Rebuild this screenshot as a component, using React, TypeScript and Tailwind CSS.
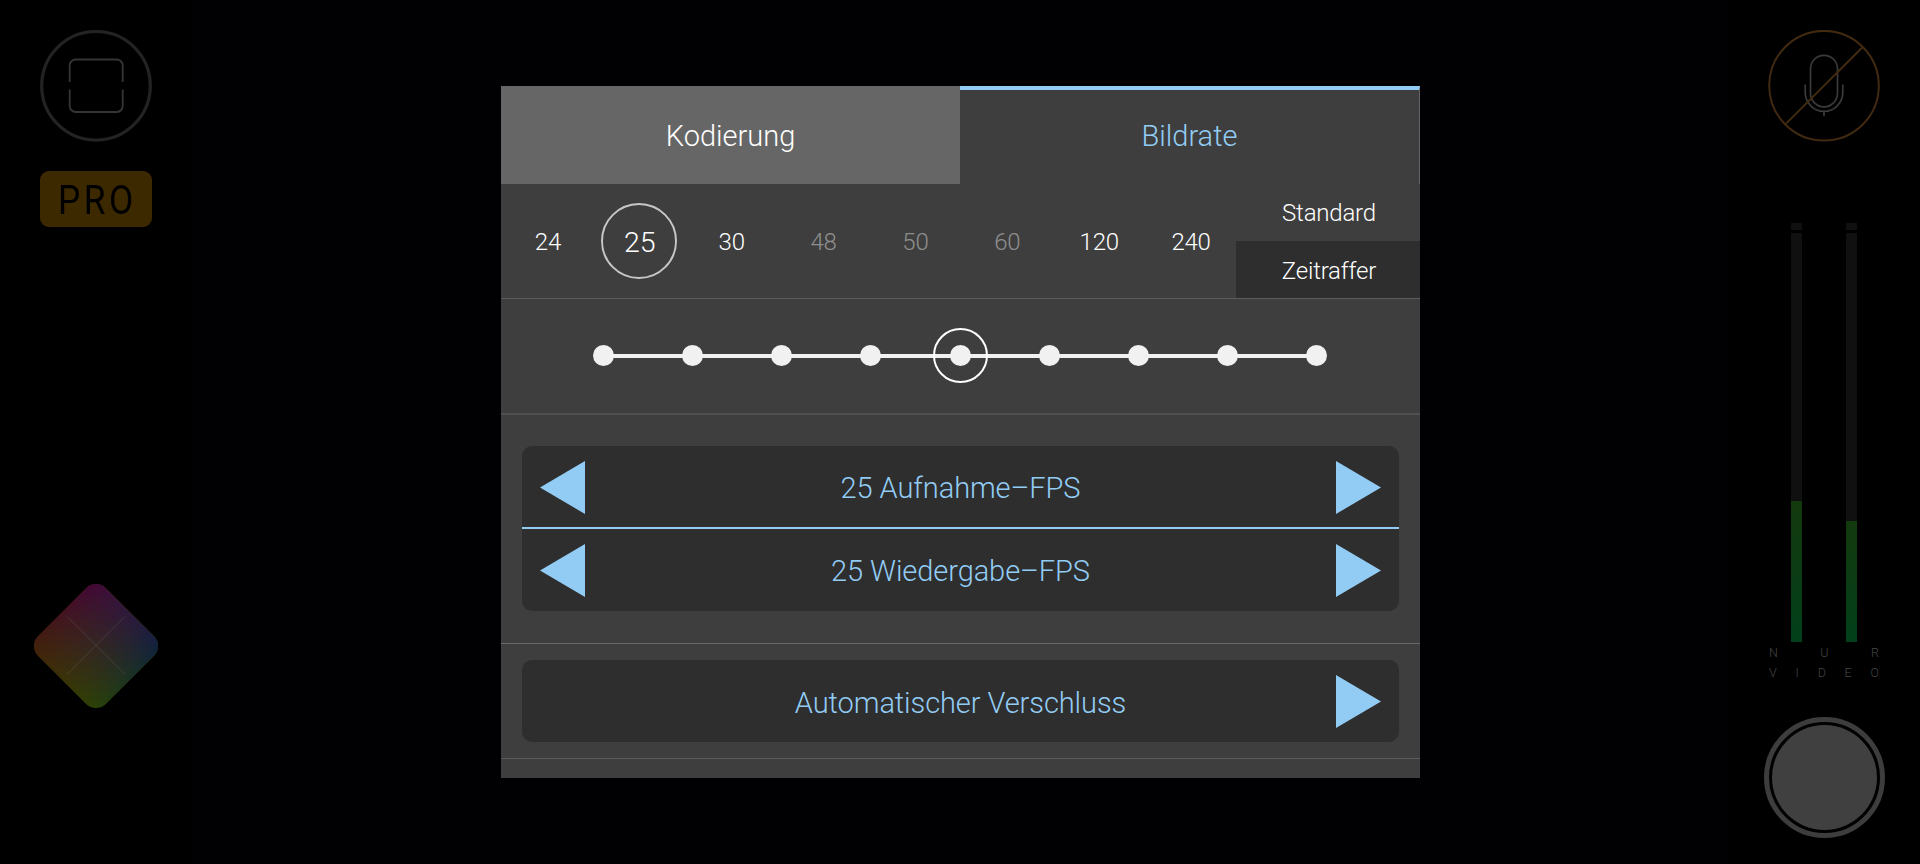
import React, { useState } from "react";
import clsx from "clsx";

interface Rate {
  value: number;
  disabled?: boolean;
}

const rates: Rate[] = [
  { value: 24 },
  { value: 25 },
  { value: 30 },
  { value: 48, disabled: true },
  { value: 50, disabled: true },
  { value: 60, disabled: true },
  { value: 120 },
  { value: 240 },
];

const steps = [0, 1, 2, 3, 4, 5, 6, 7, 8];

interface ArrowProps {
  direction: "left" | "right";
  label: string;
}

function Arrow({ direction, label }: ArrowProps) {
  return (
    <button aria-label={label} className="h-[53px] w-[45px] shrink-0">
      <svg viewBox="0 0 45 53" className="block h-full w-full fill-[#92ccf4]">
        <path d={direction === "left" ? "M45 0V53L0 26.5Z" : "M0 0V53L45 26.5Z"} />
      </svg>
    </button>
  );
}

interface SelectorRowProps {
  text: string;
  hasPrev?: boolean;
  className?: string;
}

function SelectorRow({ text, hasPrev = true, className }: SelectorRowProps) {
  return (
    <div className={clsx("flex items-center justify-between bg-[#2e2e2e] px-[18px]", className)}>
      {hasPrev ? <Arrow direction="left" label="Zurück" /> : <div className="w-[45px]" />}
      <p className="pt-0.5 text-[29px] leading-9 tracking-[-0.08px] text-[#92ccf4]">{text}</p>
      <Arrow direction="right" label="Weiter" />
    </div>
  );
}

function LeftBar() {
  return (
    <aside className="flex w-48 flex-col items-center bg-black pt-[30px]">
      <svg viewBox="0 0 112 112" className="size-28 fill-none">
        <circle cx="56" cy="55.8" r="54.3" stroke="#232323" strokeWidth="3.2" />
        <path
          d="M29.7 52V35.5a6 6 0 0 1 6-6h41a6 6 0 0 1 6 6V52M29.7 59.5V76a6 6 0 0 0 6 6h41a6 6 0 0 0 6-6V59.5"
          stroke="#353535"
          strokeWidth="1.8"
        />
      </svg>
      <div className="mt-[29px] flex h-14 w-28 items-center justify-center rounded-[9px] bg-[#3d2900]">
        <span className="scale-x-[0.86] pt-0.5 pl-1 text-[41px] leading-none font-normal tracking-[4px] text-black">PRO</span>
      </div>
      <div className="relative mt-[371px] size-24 rotate-45 overflow-hidden rounded-[14px] bg-linear-to-r from-[#43200a] to-[#2a4406]">
        <div className="absolute inset-0 bg-linear-to-r from-[#430638] to-[#0c2140] [mask-image:linear-gradient(black,transparent)]" />
        <div className="absolute top-[47px] left-[7px] h-px w-[82px] bg-white/7" />
        <div className="absolute top-[7px] left-[47px] h-[82px] w-px bg-white/7" />
      </div>
    </aside>
  );
}

function Meter({ level }: { level: number }) {
  return (
    <div className="flex w-[11px] flex-col gap-[3px]">
      <div className="h-[7px] bg-[#101010]" />
      <div className="flex h-[409px] items-end bg-[#101010]">
        <div className="w-full bg-linear-to-t from-[#00401a] to-[#13390e]" style={{ height: level }} />
      </div>
    </div>
  );
}

function RightBar() {
  return (
    <aside className="flex w-48 flex-col items-center bg-black pt-[30px]">
      <svg viewBox="0 0 112 112" className="size-28 fill-none">
        <g stroke="#3a3a3c" strokeWidth="1.7">
          <rect x="42.5" y="25.3" width="27" height="51.5" rx="13.5" />
          <path d="M37.2 54.5V62.5a18.8 18.8 0 0 0 37.6 0V54.5M56 81.3V86.3" />
        </g>
        <g stroke="#412a10" strokeWidth="2">
          <circle cx="56" cy="55.7" r="54.8" />
          <path d="M94.7 17 17.3 94.4" />
        </g>
      </svg>
      <div className="mt-[81px] flex gap-[44px]">
        <Meter level={141} />
        <Meter level={121} />
      </div>
      <div className="mt-px flex w-[110px] flex-col text-[12.5px] leading-5 text-[#454545]">
        <div className="flex justify-between">
          {"NUR".split("").map((c) => <span key={c}>{c}</span>)}
        </div>
        <div className="flex justify-between">
          {"VIDEO".split("").map((c) => <span key={c}>{c}</span>)}
        </div>
      </div>
      <button aria-label="Aufnahme" className="mt-[34px] size-[121px] rounded-full border-[5px] border-[#3d3d3d] p-[3px]">
        <div className="h-full w-full rounded-full bg-[#404040]" />
      </button>
    </aside>
  );
}

function RateRow() {
  const [selected, setSelected] = useState(25);

  return (
    <div className="flex h-[115px] border-b-[1.5px] border-[#5c5c5c]">
      <div className="grid w-[735px] grid-cols-8">
        {rates.map(({ value, disabled }) => (
          <button
            key={value}
            disabled={disabled}
            onClick={() => setSelected(value)}
            className={clsx("flex items-center justify-center", disabled ? "text-[#8e8e8e]" : "text-white")}
          >
            <span
              className={clsx(
                "flex size-[76px] items-center justify-center rounded-full pl-0.5",
                value === selected && "border-2 border-[#c6c6c6] pt-1 text-[28.5px]",
                value !== selected && "pt-px text-2xl tracking-[-0.2px]"
              )}
            >
              {value}
            </span>
          </button>
        ))}
      </div>
      <div className="flex flex-1 flex-col text-2xl tracking-[-0.2px] text-white">
        <button className="h-[57px] pt-px pl-0.5">Standard</button>
        <button className="h-[57px] bg-[#2e2e2e] pt-0.5 pl-0.5">Zeitraffer</button>
      </div>
    </div>
  );
}

function StepSlider() {
  const [active, setActive] = useState(4);

  return (
    <div className="flex h-[116px] items-center border-b-2 border-[#505050] pr-[93px] pb-px pl-[92px]">
      <div className="relative flex w-full items-center justify-between">
        <div className="absolute inset-x-2 top-[9px] h-1 bg-[#f1f1f1]" />
        {steps.map((step) => (
          <button
            key={step}
            aria-label={`Stufe ${step + 1}`}
            onClick={() => setActive(step)}
            className="relative size-[21px] rounded-full bg-[#f1f1f1]"
          >
            {step === active && (
              <span className="absolute -inset-[17px] rounded-full border-2 border-white" />
            )}
          </button>
        ))}
      </div>
    </div>
  );
}

function SettingsPanel() {
  return (
    <section className="mt-[86px] h-[692px] w-[919px] overflow-hidden bg-[#3e3e3e]">
      <div className="flex h-[98px] text-[29px]">
        <button className="w-[459px] bg-[#666666] pt-[3px] text-white">
          Kodierung
        </button>
        <button className="flex-1 border-t-4 border-r border-r-[#666666] border-t-[#92ccf4] pb-px text-[#92ccf4]">
          Bildrate
        </button>
      </div>
      <RateRow />
      <StepSlider />
      <div className="h-[229px] border-b border-[#6a6a6a] px-[21px] pt-[31px]">
        <div className="overflow-hidden rounded-[10px]">
          <SelectorRow text="25 Aufnahme–FPS" className="h-[83px] border-b-2 border-[#92ccf4] pt-px" />
          <SelectorRow text="25 Wiedergabe–FPS" className="h-[82px]" />
        </div>
      </div>
      <div className="h-[115px] border-b-[1.5px] border-[#5c5c5c] px-[21px] pt-4">
        <SelectorRow text="Automatischer Verschluss" hasPrev={false} className="h-[82px] rounded-[10px] pt-px" />
      </div>
    </section>
  );
}

function App() {
  return (
    <div className="flex h-[864px] w-[1920px] overflow-hidden bg-[#010104] font-['Roboto',sans-serif] font-light">
      <LeftBar />
      <main className="flex flex-1 justify-center pl-px">
        <SettingsPanel />
      </main>
      <RightBar />
    </div>
  );
}

export default App;
